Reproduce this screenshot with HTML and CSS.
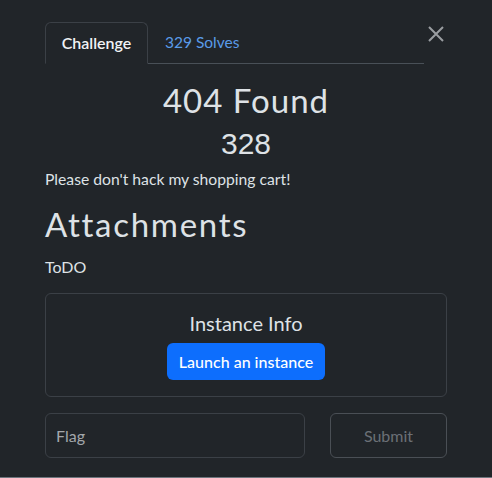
FILE: index.html
```html
<!DOCTYPE html>
<html>
<head>
<meta charset="utf-8">
<link rel="stylesheet" href="styles.css">
</head>
<body>
<div class="modal">
  <div class="head">
    <div class="tabs">
      <div class="tab active">Challenge</div>
      <div class="tab link">329 Solves</div>
    </div>
    <button class="close" aria-label="Close">
      <svg width="16" height="16" viewBox="0 0 16 16"><path d="M1 1L15 15M15 1L1 15" stroke="#9a9da1" stroke-width="2" fill="none"/></svg>
    </button>
  </div>
  <h2 class="name">404 Found</h2>
  <h4 class="value">328</h4>
  <p class="desc">Please don't hack my shopping cart!</p>
  <h2 class="attach">Attachments</h2>
  <p class="todo">ToDO</p>
  <div class="instance">
    <div class="inst-title">Instance Info</div>
    <button class="launch">Launch an instance</button>
  </div>
  <div class="submit-row">
    <div class="flag">Flag</div>
    <button class="submit">Submit</button>
  </div>
</div>
</body>
</html>
```
FILE: styles.css
```css
html, body {
  margin: 0;
  padding: 0;
  height: 100%;
}
body {
  background: #212529;
  color: #dee2e6;
  font-family: Lato, "Open Sans", sans-serif;
  border-bottom: 1px solid #6c757d;
  box-sizing: border-box;
}
.modal {
  padding: 22px 45px 0 45px;
}
.head {
  display: flex;
  align-items: flex-start;
}
.tabs {
  display: flex;
  width: 379px;
  border-bottom: 1px solid #495057;
  height: 41px;
}
.tab {
  padding: 0 17px;
  font-size: 15.5px;
  line-height: 41px;
  height: 41px;
  box-sizing: border-box;
}
.tab.active {
  color: #f1f3f5;
  font-size: 16px;
  font-weight: 600;
  border: 1px solid #3b4046;
  border-bottom: 1px solid #212529;
  border-radius: 6px 6px 0 0;
  width: 103px;
  padding: 0;
  line-height: 40px;
  text-align: center;
  height: 42px;
}
.tab.link {
  color: #5a9be8;
}
.close {
  background: none;
  border: 0;
  padding: 0;
  margin: 4px 0 0 4px;
  width: 16px;
  height: 16px;
  display: flex;
}
.name {
  margin: 17px 0 0;
  text-align: center;
  font-weight: 400;
  font-size: 33px;
  line-height: 38px;
  letter-spacing: 1px;
}
.value {
  margin: 7px 0 0;
  text-align: center;
  font-family: "Liberation Sans", Arial, sans-serif;
  font-weight: 400;
  font-size: 30px;
  line-height: 36px;
}
.desc {
  margin: 5px 0 0;
  font-size: 15.7px;
  line-height: 24px;
}
.attach {
  margin: 13px 0 0;
  font-weight: 400;
  font-size: 33px;
  line-height: 40px;
  letter-spacing: 1.7px;
}
.todo {
  margin: 11px 0 0;
  font-size: 16px;
  line-height: 24px;
}
.instance {
  margin-top: 14px;
  border: 1px solid #3b4046;
  border-radius: 6px;
  height: 104px;
  box-sizing: border-box;
  display: flex;
  flex-direction: column;
  align-items: center;
  padding-top: 17px;
}
.inst-title {
  font-size: 20px;
  line-height: 24px;
}
.launch {
  margin-top: 8px;
  background: #0d6efd;
  color: #fff;
  border: 0;
  border-radius: 6px;
  font-family: Lato, sans-serif;
  font-size: 16px;
  font-weight: 500;
  width: 158px;
  height: 37px;
}
.submit-row {
  display: flex;
  justify-content: space-between;
  margin-top: 16px;
}
.flag {
  width: 260px;
  height: 45px;
  box-sizing: border-box;
  border: 1px solid #3b4046;
  border-radius: 6px;
  padding-left: 10px;
  line-height: 43px;
  font-size: 16px;
  color: #a3a7ab;
}
.submit {
  width: 117px;
  height: 45px;
  box-sizing: border-box;
  border: 1px solid #4a4f55;
  border-radius: 6px;
  background: none;
  color: #6b7076;
  font-family: Lato, sans-serif;
  font-size: 16px;
}
```
